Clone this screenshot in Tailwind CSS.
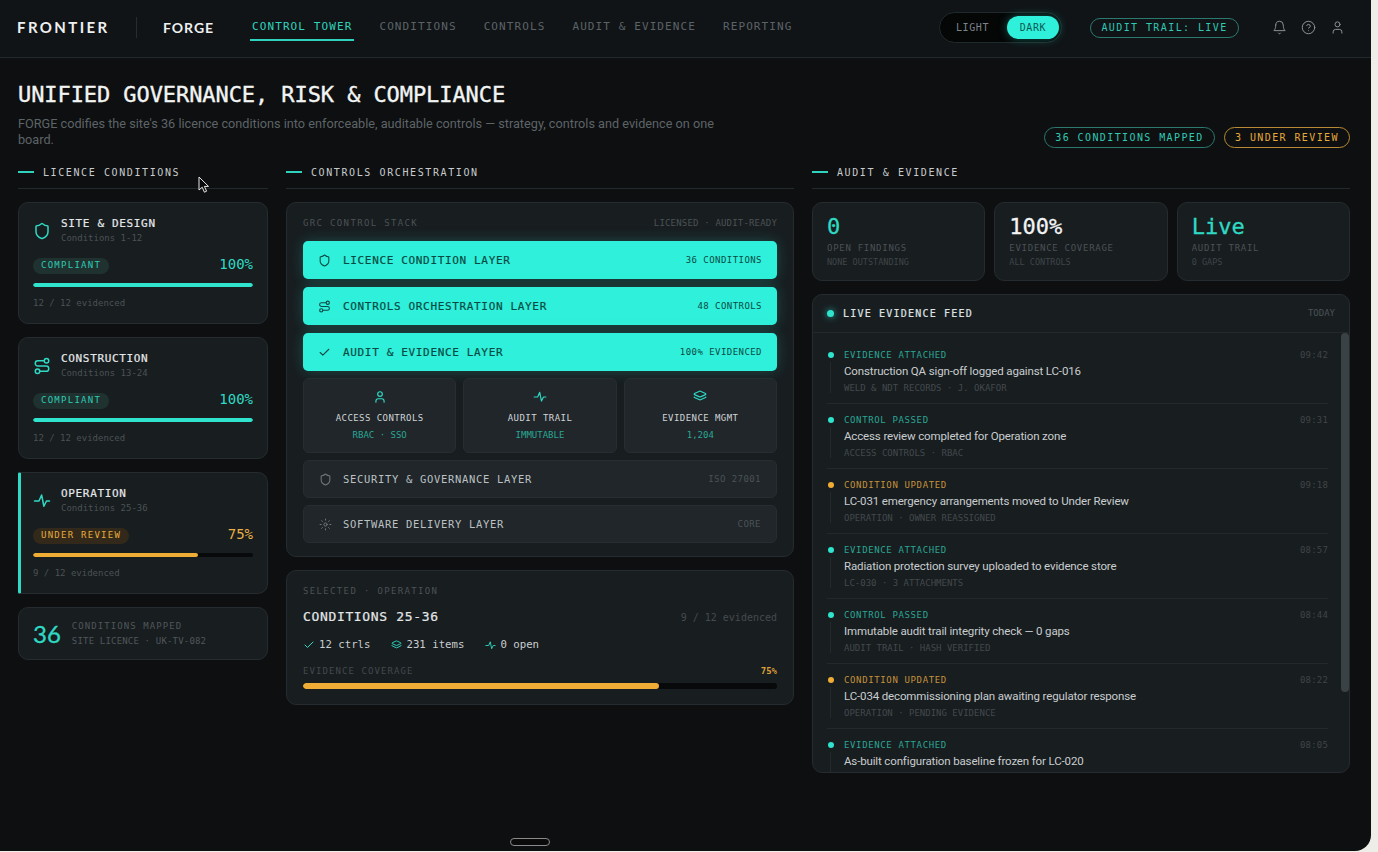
<!DOCTYPE html>
<html lang="en">
<head>
<meta charset="utf-8">
<title>FORGE</title>
<script src="https://cdn.jsdelivr.net/npm/@tailwindcss/browser@4"></script>
</head>
<body class="bg-[#eeede8]">
<div class="relative w-[1371px] h-[851px] overflow-hidden rounded-br-[16px] bg-[#0e0f10] font-['DejaVu_Sans_Mono',monospace] text-[#d5d8da]">

  <!-- HEADER -->
  <header class="h-[58px] border-b border-[#232a2d] bg-[#101417] flex items-center pb-[2px] pl-[17px] pr-[26px]">
    <div class="font-['Lato',sans-serif] font-bold text-[15px] leading-none tracking-[0.16em] text-[#eef0f0] w-[119px]">FRONTIER</div>
    <div class="w-px h-[21px] bg-[#262c2f]"></div>
    <div class="font-['Lato',sans-serif] font-bold text-[14px] leading-none tracking-[0.07em] text-[#eef0f0] ml-[26px] w-[87px]">FORGE</div>
    <nav class="flex gap-[23px] h-full items-center text-[11px] tracking-[0.1em] text-[#5c6367]">
      <a class="relative px-[2px] h-full flex items-center text-[#2fd3bd]">CONTROL TOWER<span class="absolute left-0 right-0 bottom-[14px] h-[2px] bg-[#2fd3bd]"></span></a>
      <a class="px-[2px]">CONDITIONS</a>
      <a class="px-[2px]">CONTROLS</a>
      <a class="px-[2px]">AUDIT &amp; EVIDENCE</a>
      <a class="px-[2px]">REPORTING</a>
    </nav>
    <div class="ml-auto flex items-center">
      <div class="w-[123px] h-[31px] rounded-full bg-[#050606] border border-[#1f2a2c] flex items-center justify-between pl-[16px] pr-[2px] text-[10px] tracking-[0.06em]">
        <span class="text-[#7c8386]">LIGHT</span>
        <span class="w-[52px] h-[23px] rounded-full bg-[#2ff0da] text-[#0e5a52] flex items-center justify-center shadow-[0_0_10px_rgba(47,240,218,0.35)]">DARK</span>
      </div>
      <div class="ml-[28px] h-[20px] w-[149px] rounded-full border border-[#2a7a6f] flex items-center justify-center text-[10px] tracking-[0.14em] text-[#2fc9b4]">AUDIT TRAIL: LIVE</div>
      <div class="ml-[33px] flex items-center gap-[14px] text-[#8a9194]">
        <svg class="w-[15px] h-[15px]" viewBox="0 0 24 24" fill="none" stroke="currentColor" stroke-width="1.6" stroke-linecap="round" stroke-linejoin="round"><path d="M6 8a6 6 0 0 1 12 0c0 7 3 9 3 9H3s3-2 3-9"/><path d="M10.3 21a1.94 1.94 0 0 0 3.4 0"/></svg>
        <svg class="w-[15px] h-[15px]" viewBox="0 0 24 24" fill="none" stroke="currentColor" stroke-width="1.6" stroke-linecap="round" stroke-linejoin="round"><circle cx="12" cy="12" r="10"/><path d="M9.09 9a3 3 0 0 1 5.83 1c0 2-3 3-3 3"/><path d="M12 17h.01"/></svg>
        <svg class="w-[15px] h-[15px]" viewBox="0 0 24 24" fill="none" stroke="currentColor" stroke-width="1.6" stroke-linecap="round" stroke-linejoin="round"><path d="M19 21v-2a4 4 0 0 0-4-4H9a4 4 0 0 0-4 4v2"/><circle cx="12" cy="7" r="4"/></svg>
      </div>
    </div>
  </header>

  <main class="pl-[18px] pr-[21px] pt-[23px]">
    <!-- HERO -->
    <section class="flex items-end justify-between">
      <div>
        <h1 class="text-[22px] leading-[28px] tracking-[-0.08px] text-[#f2f4f4] font-normal [-webkit-text-stroke:0.35px_#f2f4f4]">UNIFIED GOVERNANCE, RISK &amp; COMPLIANCE</h1>
        <p class="mt-[7px] w-[720px] font-['Roboto',sans-serif] text-[12.7px] leading-[16px] text-[#5d6468]">FORGE codifies the site's 36 licence conditions into enforceable, auditable controls — strategy, controls and evidence on one board.</p>
      </div>
      <div class="flex gap-[9px] text-[10px] tracking-[0.14em]">
        <span class="h-[21px] w-[171px] rounded-full border border-[#2a7a6f] text-[#2fc9b4] flex items-center justify-center">36 CONDITIONS MAPPED</span>
        <span class="h-[21px] w-[126px] rounded-full border border-[#b98a35] text-[#e5a93c] flex items-center justify-center">3 UNDER REVIEW</span>
      </div>
    </section>

    <!-- COLUMNS -->
    <section class="mt-[17px] grid grid-cols-[250px_508px_538px] gap-[18px] items-start">

      <!-- LEFT -->
      <div>
        <div class="h-[24px] border-b border-[#232a2d] flex items-start gap-[9px] text-[10px] leading-[16px] tracking-[0.16em] text-[#c7cbcd] mb-[13px]">
          <span class="w-[16px] h-[2px] bg-[#2fd3bd] mt-[6px]"></span>LICENCE CONDITIONS
        </div>
        <div class="flex flex-col gap-[13px]">

          <article class="h-[122px] rounded-[10px] border border-[#252b2e] bg-[#181d20] px-[14px] pt-[14px]">
            <div class="flex items-center gap-[10px]">
              <svg class="w-[18px] h-[18px] text-[#2fd9c3]" viewBox="0 0 24 24" fill="none" stroke="currentColor" stroke-width="2" stroke-linecap="round" stroke-linejoin="round"><path d="M20 13c0 5-3.500 7.500-7.660 8.950a1 1 0 0 1-.67-.01C7.500 20.500 4 18 4 13V6a1 1 0 0 1 1-1c2 0 4.500-1.200 6.240-2.720a1.170 1.170 0 0 1 1.520 0C14.510 3.810 17 5 19 5a1 1 0 0 1 1 1z"/></svg>
              <div>
                <div class="text-[11px] leading-[14px] tracking-[0.06em] text-[#e4e7e8] [-webkit-text-stroke:0.2px_#e4e7e8]">SITE &amp; DESIGN</div>
                <div class="mt-[1px] text-[9px] leading-[12px] text-[#4b5255]">Conditions 1-12</div>
              </div>
            </div>
            <div class="mt-[14px] h-[16px] flex items-start justify-between">
              <span class="h-[16px] rounded-full bg-[#1f3230] px-[8px] flex items-center text-[9px] tracking-[0.14em] text-[#2fc9b4]">COMPLIANT</span>
              <span class="text-[14px] leading-[13px] text-[#2fd9c3]">100%</span>
            </div>
            <div class="mt-[9px] h-[4px] rounded-full bg-[#07090a] overflow-hidden"><div class="h-full w-full rounded-full bg-[#2fe3cd]"></div></div>
            <div class="mt-[10px] text-[9px] leading-[12px] text-[#4b5255]">12 / 12 evidenced</div>
          </article>

          <article class="h-[122px] rounded-[10px] border border-[#252b2e] bg-[#181d20] px-[14px] pt-[14px]">
            <div class="flex items-center gap-[10px]">
              <svg class="w-[18px] h-[18px] text-[#2fd9c3]" viewBox="0 0 24 24" fill="none" stroke="currentColor" stroke-width="2" stroke-linecap="round" stroke-linejoin="round"><circle cx="6" cy="19" r="3"/><path d="M9 19h8.500a3.500 3.500 0 0 0 0-7h-11a3.500 3.500 0 0 1 0-7H15"/><circle cx="18" cy="5" r="3"/></svg>
              <div>
                <div class="text-[11px] leading-[14px] tracking-[0.06em] text-[#e4e7e8] [-webkit-text-stroke:0.2px_#e4e7e8]">CONSTRUCTION</div>
                <div class="mt-[1px] text-[9px] leading-[12px] text-[#4b5255]">Conditions 13-24</div>
              </div>
            </div>
            <div class="mt-[14px] h-[16px] flex items-start justify-between">
              <span class="h-[16px] rounded-full bg-[#1f3230] px-[8px] flex items-center text-[9px] tracking-[0.14em] text-[#2fc9b4]">COMPLIANT</span>
              <span class="text-[14px] leading-[13px] text-[#2fd9c3]">100%</span>
            </div>
            <div class="mt-[9px] h-[4px] rounded-full bg-[#07090a] overflow-hidden"><div class="h-full w-full rounded-full bg-[#2fe3cd]"></div></div>
            <div class="mt-[10px] text-[9px] leading-[12px] text-[#4b5255]">12 / 12 evidenced</div>
          </article>

          <article class="h-[122px] rounded-r-[10px] rounded-l-[2px] border border-[#252b2e] border-l-[3px] border-l-[#2fd9c3] bg-[#181d20] pl-[12px] pr-[14px] pt-[14px]">
            <div class="flex items-center gap-[10px]">
              <svg class="w-[18px] h-[18px] text-[#2fd9c3]" viewBox="0 0 24 24" fill="none" stroke="currentColor" stroke-width="2" stroke-linecap="round" stroke-linejoin="round"><path d="M2 12h6l3.500-8 3 15 3.500-7h4"/></svg>
              <div>
                <div class="text-[11px] leading-[14px] tracking-[0.06em] text-[#e4e7e8] [-webkit-text-stroke:0.2px_#e4e7e8]">OPERATION</div>
                <div class="mt-[1px] text-[9px] leading-[12px] text-[#4b5255]">Conditions 25-36</div>
              </div>
            </div>
            <div class="mt-[14px] h-[16px] flex items-start justify-between">
              <span class="h-[16px] rounded-full bg-[#33291a] px-[8px] flex items-center text-[9px] tracking-[0.14em] text-[#e5a93c]">UNDER REVIEW</span>
              <span class="text-[14px] leading-[13px] text-[#eab045]">75%</span>
            </div>
            <div class="mt-[9px] h-[4px] rounded-full bg-[#07090a] overflow-hidden"><div class="h-full w-3/4 rounded-full bg-[#f0ad36]"></div></div>
            <div class="mt-[10px] text-[9px] leading-[12px] text-[#4b5255]">9 / 12 evidenced</div>
          </article>

          <article class="h-[53px] rounded-[10px] border border-[#252b2e] bg-[#181d20] px-[14px] flex items-center gap-[11px]">
            <span class="font-['Lato',sans-serif] text-[24px] leading-none text-[#2fd9c3] [-webkit-text-stroke:0.3px_#2fd9c3]">36</span>
            <div class="text-[9px] leading-[15px] text-[#50575a]">
              <div class="tracking-[0.12em]">CONDITIONS MAPPED</div>
              <div class="tracking-[0.02em]">SITE LICENCE · UK-TV-082</div>
            </div>
          </article>
        </div>
      </div>

      <!-- MIDDLE -->
      <div>
        <div class="h-[24px] border-b border-[#232a2d] flex items-start gap-[9px] text-[10px] leading-[16px] tracking-[0.16em] text-[#c7cbcd] mb-[13px]">
          <span class="w-[16px] h-[2px] bg-[#2fd3bd] mt-[6px]"></span>CONTROLS ORCHESTRATION
        </div>

        <div class="h-[355px] rounded-[10px] border border-[#252b2e] bg-[#181d20] px-[16px] pt-[14px]">
          <div class="flex justify-between text-[9px] leading-[12px] text-[#4b5255]">
            <span class="tracking-[0.15em]">GRC CONTROL STACK</span>
            <span class="tracking-[0.02em]">LICENSED · AUDIT-READY</span>
          </div>

          <div class="mt-[12px] flex flex-col gap-[8px]">
            <div class="h-[38px] rounded-[5px] bg-[#2ff0da] shadow-[0_0_14px_rgba(47,240,218,0.22)] pl-[15px] pr-[15px] flex items-center text-[#0b4a43]">
              <svg class="w-[13px] h-[13px] mr-[12px]" viewBox="0 0 24 24" fill="none" stroke="currentColor" stroke-width="2" stroke-linecap="round" stroke-linejoin="round"><path d="M20 13c0 5-3.500 7.500-7.660 8.950a1 1 0 0 1-.67-.01C7.500 20.500 4 18 4 13V6a1 1 0 0 1 1-1c2 0 4.500-1.200 6.240-2.720a1.170 1.170 0 0 1 1.520 0C14.510 3.810 17 5 19 5a1 1 0 0 1 1 1z"/></svg>
              <span class="pt-[2px] text-[11px] tracking-[0.06em] [-webkit-text-stroke:0.2px_#0b4a43]">LICENCE CONDITION LAYER</span>
              <span class="pt-[2px] ml-auto text-[9px] tracking-[0.05em]">36 CONDITIONS</span>
            </div>
            <div class="h-[38px] rounded-[5px] bg-[#2ff0da] shadow-[0_0_14px_rgba(47,240,218,0.22)] pl-[15px] pr-[15px] flex items-center text-[#0b4a43]">
              <svg class="w-[13px] h-[13px] mr-[12px]" viewBox="0 0 24 24" fill="none" stroke="currentColor" stroke-width="2" stroke-linecap="round" stroke-linejoin="round"><circle cx="6" cy="19" r="3"/><path d="M9 19h8.500a3.500 3.500 0 0 0 0-7h-11a3.500 3.500 0 0 1 0-7H15"/><circle cx="18" cy="5" r="3"/></svg>
              <span class="pt-[2px] text-[11px] tracking-[0.06em] [-webkit-text-stroke:0.2px_#0b4a43]">CONTROLS ORCHESTRATION LAYER</span>
              <span class="pt-[2px] ml-auto text-[9px] tracking-[0.05em]">48 CONTROLS</span>
            </div>
            <div class="h-[38px] rounded-[5px] bg-[#2ff0da] shadow-[0_0_14px_rgba(47,240,218,0.22)] pl-[15px] pr-[15px] flex items-center text-[#0b4a43]">
              <svg class="w-[13px] h-[13px] mr-[12px]" viewBox="0 0 24 24" fill="none" stroke="currentColor" stroke-width="2" stroke-linecap="round" stroke-linejoin="round"><path d="M20 6 9 17l-5-5"/></svg>
              <span class="pt-[2px] text-[11px] tracking-[0.06em] [-webkit-text-stroke:0.2px_#0b4a43]">AUDIT &amp; EVIDENCE LAYER</span>
              <span class="pt-[2px] ml-auto text-[9px] tracking-[0.05em]">100% EVIDENCED</span>
            </div>
          </div>

          <div class="mt-[7px] grid grid-cols-3 gap-[7px]">
            <div class="h-[75px] rounded-[6px] border border-[#272e31] bg-[#20262a] flex flex-col items-center pt-[11px]">
              <svg class="w-[14px] h-[14px] text-[#2fd9c3]" viewBox="0 0 24 24" fill="none" stroke="currentColor" stroke-width="2" stroke-linecap="round" stroke-linejoin="round"><path d="M19 21v-2a4 4 0 0 0-4-4H9a4 4 0 0 0-4 4v2"/><circle cx="12" cy="7" r="4"/></svg>
              <div class="mt-[8px] text-[9px] leading-[12px] tracking-[0.05em] text-[#d0d4d6]">ACCESS CONTROLS</div>
              <div class="mt-[5px] text-[9px] leading-[12px] text-[#2aa694]">RBAC · SSO</div>
            </div>
            <div class="h-[75px] rounded-[6px] border border-[#272e31] bg-[#20262a] flex flex-col items-center pt-[11px]">
              <svg class="w-[14px] h-[14px] text-[#2fd9c3]" viewBox="0 0 24 24" fill="none" stroke="currentColor" stroke-width="2" stroke-linecap="round" stroke-linejoin="round"><path d="M2 12h6l3.500-8 3 15 3.500-7h4"/></svg>
              <div class="mt-[8px] text-[9px] leading-[12px] tracking-[0.05em] text-[#d0d4d6]">AUDIT TRAIL</div>
              <div class="mt-[5px] text-[9px] leading-[12px] text-[#2aa694]">IMMUTABLE</div>
            </div>
            <div class="h-[75px] rounded-[6px] border border-[#272e31] bg-[#20262a] flex flex-col items-center pt-[11px]">
              <svg class="w-[14px] h-[14px] text-[#2fd9c3]" viewBox="0 0 24 24" fill="none" stroke="currentColor" stroke-width="2" stroke-linecap="round" stroke-linejoin="round"><path d="m12.830 2.180a2 2 0 0 0-1.660 0L2.600 6.080a1 1 0 0 0 0 1.830l8.580 3.910a2 2 0 0 0 1.660 0l8.580-3.900a1 1 0 0 0 0-1.830Z"/><path d="M2 12a1 1 0 0 0 .58.91l8.600 3.910a2 2 0 0 0 1.650 0l8.580-3.900A1 1 0 0 0 22 12"/></svg>
              <div class="mt-[8px] text-[9px] leading-[12px] tracking-[0.05em] text-[#d0d4d6]">EVIDENCE MGMT</div>
              <div class="mt-[5px] text-[9px] leading-[12px] text-[#2aa694]">1,204</div>
            </div>
          </div>

          <div class="mt-[7px] flex flex-col gap-[7px]">
            <div class="h-[38px] rounded-[6px] border border-[#272e31] bg-[#20262a] pl-[15px] pr-[15px] flex items-center">
              <svg class="w-[13px] h-[13px] mr-[11px] text-[#6e7679]" viewBox="0 0 24 24" fill="none" stroke="currentColor" stroke-width="2" stroke-linecap="round" stroke-linejoin="round"><path d="M20 13c0 5-3.500 7.500-7.660 8.950a1 1 0 0 1-.67-.01C7.500 20.500 4 18 4 13V6a1 1 0 0 1 1-1c2 0 4.500-1.200 6.240-2.720a1.170 1.170 0 0 1 1.520 0C14.510 3.810 17 5 19 5a1 1 0 0 1 1 1z"/></svg>
              <span class="pt-[2px] text-[10.5px] tracking-[0.065em] text-[#bcc1c3]">SECURITY &amp; GOVERNANCE LAYER</span>
              <span class="pt-[1px] ml-auto text-[9px] tracking-[0.05em] text-[#4b5255]">ISO 27001</span>
            </div>
            <div class="h-[38px] rounded-[6px] border border-[#272e31] bg-[#20262a] pl-[15px] pr-[15px] flex items-center">
              <svg class="w-[13px] h-[13px] mr-[11px] text-[#6e7679]" viewBox="0 0 24 24" fill="none" stroke="currentColor" stroke-width="1.800" stroke-linecap="round"><circle cx="12" cy="12" r="3"/><path d="M12 2v2"/><path d="M12 20v2"/><path d="m4.930 4.930 1.410 1.410"/><path d="m17.660 17.660 1.410 1.410"/><path d="M2 12h2"/><path d="M20 12h2"/><path d="m6.340 17.660-1.410 1.410"/><path d="m19.070 4.930-1.410 1.410"/></svg>
              <span class="pt-[2px] text-[10.5px] tracking-[0.065em] text-[#bcc1c3]">SOFTWARE DELIVERY LAYER</span>
              <span class="pt-[1px] ml-auto text-[9px] tracking-[0.05em] text-[#4b5255]">CORE</span>
            </div>
          </div>
        </div>

        <div class="mt-[13px] h-[135px] rounded-[10px] border border-[#252b2e] bg-[#181d20] px-[16px] pt-[14px]">
          <div class="text-[9px] leading-[12px] tracking-[0.15em] text-[#4b5255]">SELECTED · OPERATION</div>
          <div class="mt-[11px] flex items-center justify-between">
            <span class="text-[13px] leading-[18px] tracking-[0.05em] text-[#e4e7e8] [-webkit-text-stroke:0.2px_#e4e7e8]">CONDITIONS 25-36</span>
            <span class="text-[10px] text-[#454b4e]">9 / 12 evidenced</span>
          </div>
          <div class="mt-[12px] flex items-center text-[10.7px] leading-[14px] text-[#c9cdcf]">
            <svg class="w-[12px] h-[12px] mr-[4px] text-[#2fd9c3]" viewBox="0 0 24 24" fill="none" stroke="currentColor" stroke-width="2" stroke-linecap="round" stroke-linejoin="round"><path d="M20 6 9 17l-5-5"/></svg>
            <span>12 ctrls</span>
            <svg class="w-[11px] h-[11px] ml-[21px] mr-[4px] text-[#2fd9c3]" viewBox="0 0 24 24" fill="none" stroke="currentColor" stroke-width="2" stroke-linecap="round" stroke-linejoin="round"><path d="m12.830 2.180a2 2 0 0 0-1.660 0L2.600 6.080a1 1 0 0 0 0 1.830l8.580 3.910a2 2 0 0 0 1.660 0l8.580-3.900a1 1 0 0 0 0-1.830Z"/><path d="M2 12a1 1 0 0 0 .58.91l8.600 3.910a2 2 0 0 0 1.650 0l8.580-3.900A1 1 0 0 0 22 12"/></svg>
            <span>231 items</span>
            <svg class="w-[11px] h-[11px] ml-[21px] mr-[4px] text-[#2fd9c3]" viewBox="0 0 24 24" fill="none" stroke="currentColor" stroke-width="2" stroke-linecap="round" stroke-linejoin="round"><path d="M2 12h6l3.500-8 3 15 3.500-7h4"/></svg>
            <span>0 open</span>
          </div>
          <div class="mt-[13px] flex justify-between text-[9px] leading-[12px]">
            <span class="tracking-[0.12em] text-[#43494c]">EVIDENCE COVERAGE</span>
            <span class="font-bold text-[#d99f38]">75%</span>
          </div>
          <div class="mt-[6px] h-[6px] rounded-full bg-[#07090a] overflow-hidden"><div class="h-full w-3/4 rounded-full bg-[#f0ad36]"></div></div>
        </div>
      </div>

      <!-- RIGHT -->
      <div>
        <div class="h-[24px] border-b border-[#232a2d] flex items-start gap-[9px] text-[10px] leading-[16px] tracking-[0.16em] text-[#c7cbcd] mb-[13px]">
          <span class="w-[16px] h-[2px] bg-[#2fd3bd] mt-[6px]"></span>AUDIT &amp; EVIDENCE
        </div>
        <div class="grid grid-cols-3 gap-[9px]">
          <div class="h-[79px] rounded-[10px] border border-[#252b2e] bg-[#181d20] px-[14px] pt-[11px]">
            <div class="text-[22px] leading-[26px] text-[#2fd9c3] [-webkit-text-stroke:0.3px_#2fd9c3]">0</div>
            <div class="mt-[2px] text-[9px] leading-[12px] tracking-[0.08em] text-[#4b5255]">OPEN FINDINGS</div>
            <div class="mt-[2px] text-[8.500px] leading-[12px] text-[#3f4548]">NONE OUTSTANDING</div>
          </div>
          <div class="h-[79px] rounded-[10px] border border-[#252b2e] bg-[#181d20] px-[14px] pt-[11px]">
            <div class="text-[22px] leading-[26px] text-[#f2f4f4] [-webkit-text-stroke:0.3px_#f2f4f4]">100%</div>
            <div class="mt-[2px] text-[9px] leading-[12px] tracking-[0.08em] text-[#4b5255]">EVIDENCE COVERAGE</div>
            <div class="mt-[2px] text-[8.500px] leading-[12px] text-[#3f4548]">ALL CONTROLS</div>
          </div>
          <div class="h-[79px] rounded-[10px] border border-[#252b2e] bg-[#181d20] px-[14px] pt-[11px]">
            <div class="text-[22px] leading-[26px] text-[#2fd9c3] [-webkit-text-stroke:0.3px_#2fd9c3]">Live</div>
            <div class="mt-[2px] text-[9px] leading-[12px] tracking-[0.08em] text-[#4b5255]">AUDIT TRAIL</div>
            <div class="mt-[2px] text-[8.500px] leading-[12px] text-[#3f4548]">0 GAPS</div>
          </div>
        </div>

        <div class="relative mt-[13px] h-[479px] rounded-[10px] border border-[#252b2e] bg-[#181d20] overflow-hidden">
          <div class="h-[38px] border-b border-[#232a2d] pl-[14px] pr-[14px] flex items-center">
            <span class="w-[7px] h-[7px] rounded-full bg-[#2fe3cd] shadow-[0_0_7px_rgba(47,240,218,0.7)]"></span>
            <span class="ml-[9px] text-[10px] tracking-[0.12em] text-[#dfe2e3] [-webkit-text-stroke:0.2px_#dfe2e3]">LIVE EVIDENCE FEED</span>
            <span class="ml-auto text-[9px] text-[#4b5255]">TODAY</span>
          </div>
          <div class="pl-[14px] pr-[21px] pt-[6px]">

            <div class="h-[65px] border-b border-[#22282b] flex gap-[10px] pt-[10px]">
              <div class="w-[7px] flex flex-col items-center pt-[3px] pb-[10px]"><span class="w-[6px] h-[6px] rounded-full bg-[#2fe3cd]"></span><span class="mt-[4px] w-px flex-1 bg-[#23292c]"></span></div>
              <div class="flex-1">
                <div class="flex justify-between text-[9px] leading-[12px]"><span class="tracking-[0.07em] text-[#2aa694]">EVIDENCE ATTACHED</span><span class="text-[#3f4548] tracking-[0.02em]">09:42</span></div>
                <div class="mt-[2px] font-['Roboto',sans-serif] text-[11.5px] tracking-[-0.14px] leading-[16px] text-[#c9cdcf]">Construction QA sign-off logged against LC-016</div>
                <div class="mt-[3px] text-[9px] leading-[12px] text-[#43494c]">WELD &amp; NDT RECORDS · J. OKAFOR</div>
              </div>
            </div>

            <div class="h-[65px] border-b border-[#22282b] flex gap-[10px] pt-[10px]">
              <div class="w-[7px] flex flex-col items-center pt-[3px] pb-[10px]"><span class="w-[6px] h-[6px] rounded-full bg-[#2fe3cd]"></span><span class="mt-[4px] w-px flex-1 bg-[#23292c]"></span></div>
              <div class="flex-1">
                <div class="flex justify-between text-[9px] leading-[12px]"><span class="tracking-[0.07em] text-[#2aa694]">CONTROL PASSED</span><span class="text-[#3f4548] tracking-[0.02em]">09:31</span></div>
                <div class="mt-[2px] font-['Roboto',sans-serif] text-[11.5px] tracking-[-0.14px] leading-[16px] text-[#c9cdcf]">Access review completed for Operation zone</div>
                <div class="mt-[3px] text-[9px] leading-[12px] text-[#43494c]">ACCESS CONTROLS · RBAC</div>
              </div>
            </div>

            <div class="h-[65px] border-b border-[#22282b] flex gap-[10px] pt-[10px]">
              <div class="w-[7px] flex flex-col items-center pt-[3px] pb-[10px]"><span class="w-[6px] h-[6px] rounded-full bg-[#f0ad36]"></span><span class="mt-[4px] w-px flex-1 bg-[#23292c]"></span></div>
              <div class="flex-1">
                <div class="flex justify-between text-[9px] leading-[12px]"><span class="tracking-[0.07em] text-[#c4923a]">CONDITION UPDATED</span><span class="text-[#3f4548] tracking-[0.02em]">09:18</span></div>
                <div class="mt-[2px] font-['Roboto',sans-serif] text-[11.5px] tracking-[-0.14px] leading-[16px] text-[#c9cdcf]">LC-031 emergency arrangements moved to Under Review</div>
                <div class="mt-[3px] text-[9px] leading-[12px] text-[#43494c]">OPERATION · OWNER REASSIGNED</div>
              </div>
            </div>

            <div class="h-[65px] border-b border-[#22282b] flex gap-[10px] pt-[10px]">
              <div class="w-[7px] flex flex-col items-center pt-[3px] pb-[10px]"><span class="w-[6px] h-[6px] rounded-full bg-[#2fe3cd]"></span><span class="mt-[4px] w-px flex-1 bg-[#23292c]"></span></div>
              <div class="flex-1">
                <div class="flex justify-between text-[9px] leading-[12px]"><span class="tracking-[0.07em] text-[#2aa694]">EVIDENCE ATTACHED</span><span class="text-[#3f4548] tracking-[0.02em]">08:57</span></div>
                <div class="mt-[2px] font-['Roboto',sans-serif] text-[11.5px] tracking-[-0.14px] leading-[16px] text-[#c9cdcf]">Radiation protection survey uploaded to evidence store</div>
                <div class="mt-[3px] text-[9px] leading-[12px] text-[#43494c]">LC-030 · 3 ATTACHMENTS</div>
              </div>
            </div>

            <div class="h-[65px] border-b border-[#22282b] flex gap-[10px] pt-[10px]">
              <div class="w-[7px] flex flex-col items-center pt-[3px] pb-[10px]"><span class="w-[6px] h-[6px] rounded-full bg-[#2fe3cd]"></span><span class="mt-[4px] w-px flex-1 bg-[#23292c]"></span></div>
              <div class="flex-1">
                <div class="flex justify-between text-[9px] leading-[12px]"><span class="tracking-[0.07em] text-[#2aa694]">CONTROL PASSED</span><span class="text-[#3f4548] tracking-[0.02em]">08:44</span></div>
                <div class="mt-[2px] font-['Roboto',sans-serif] text-[11.5px] tracking-[-0.14px] leading-[16px] text-[#c9cdcf]">Immutable audit trail integrity check — 0 gaps</div>
                <div class="mt-[3px] text-[9px] leading-[12px] text-[#43494c]">AUDIT TRAIL · HASH VERIFIED</div>
              </div>
            </div>

            <div class="h-[65px] border-b border-[#22282b] flex gap-[10px] pt-[10px]">
              <div class="w-[7px] flex flex-col items-center pt-[3px] pb-[10px]"><span class="w-[6px] h-[6px] rounded-full bg-[#f0ad36]"></span><span class="mt-[4px] w-px flex-1 bg-[#23292c]"></span></div>
              <div class="flex-1">
                <div class="flex justify-between text-[9px] leading-[12px]"><span class="tracking-[0.07em] text-[#c4923a]">CONDITION UPDATED</span><span class="text-[#3f4548] tracking-[0.02em]">08:22</span></div>
                <div class="mt-[2px] font-['Roboto',sans-serif] text-[11.5px] tracking-[-0.14px] leading-[16px] text-[#c9cdcf]">LC-034 decommissioning plan awaiting regulator response</div>
                <div class="mt-[3px] text-[9px] leading-[12px] text-[#43494c]">OPERATION · PENDING EVIDENCE</div>
              </div>
            </div>

            <div class="h-[65px] flex gap-[10px] pt-[10px]">
              <div class="w-[7px] flex flex-col items-center pt-[3px]"><span class="w-[6px] h-[6px] rounded-full bg-[#2fe3cd]"></span><span class="mt-[4px] w-px flex-1 bg-[#23292c]"></span></div>
              <div class="flex-1">
                <div class="flex justify-between text-[9px] leading-[12px]"><span class="tracking-[0.07em] text-[#2aa694]">EVIDENCE ATTACHED</span><span class="text-[#3f4548] tracking-[0.02em]">08:05</span></div>
                <div class="mt-[2px] font-['Roboto',sans-serif] text-[11.5px] tracking-[-0.14px] leading-[16px] text-[#c9cdcf]">As-built configuration baseline frozen for LC-020</div>
              </div>
            </div>
          </div>
          <div class="absolute right-0 top-[38px] w-[8px] h-[359px] rounded-full bg-[#3b4245]"></div>
        </div>
      </div>
    </section>
  </main>

  <!-- Home indicator -->
  <div class="absolute left-[510px] top-[838px] w-[40px] h-[8px] rounded-full border border-[#8a8a8a] bg-[#0a0a0a]"></div>

  <!-- Cursor -->
  <svg class="absolute left-[198px] top-[176px] w-[13px] h-[18px]" viewBox="0 0 13 18"><path d="M1 1v13l3.200-2.800 2.200 5 2.200-1-2.200-4.800H10.500z" fill="#0a0a0a" stroke="#e8e8e8" stroke-width="1"/></svg>
</div>
</body>
</html>
